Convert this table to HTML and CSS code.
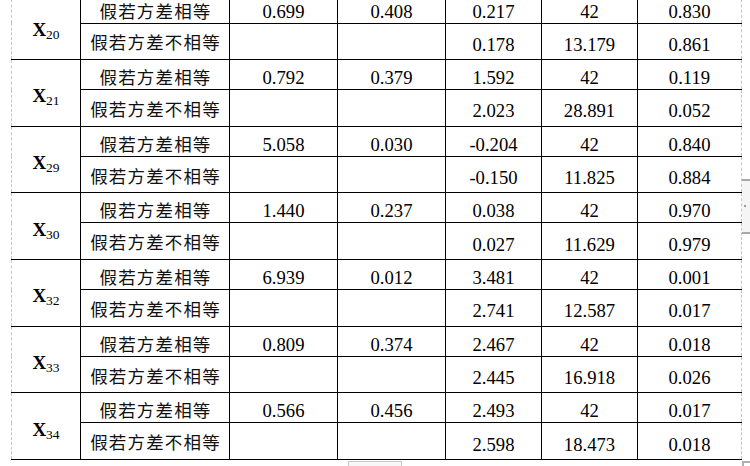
FILE: index.html
```html
<!DOCTYPE html>
<html lang="zh">
<head>
<meta charset="utf-8">
<title>独立样本检验</title>
<link rel="stylesheet" href="styles.css">
</head>
<body>
<div class="page">
  <table class="t">
    <colgroup>
      <col class="c-var"><col class="c-cn"><col class="c-n1"><col class="c-n2"><col class="c-n3"><col class="c-n4"><col class="c-n5">
    </colgroup>
    <tbody>
      <tr class="r1"><td class="var" rowspan="2"><span class="x">X</span><span class="sub">20</span></td><td class="cn">假若方差相等</td><td>0.699</td><td>0.408</td><td>0.217</td><td>42</td><td>0.830</td></tr>
      <tr class="r2"><td class="cn">假若方差不相等</td><td></td><td></td><td>0.178</td><td>13.179</td><td>0.861</td></tr>
      <tr class="r1"><td class="var" rowspan="2"><span class="x">X</span><span class="sub">21</span></td><td class="cn">假若方差相等</td><td>0.792</td><td>0.379</td><td>1.592</td><td>42</td><td>0.119</td></tr>
      <tr class="r2"><td class="cn">假若方差不相等</td><td></td><td></td><td>2.023</td><td>28.891</td><td>0.052</td></tr>
      <tr class="r1"><td class="var" rowspan="2"><span class="x">X</span><span class="sub">29</span></td><td class="cn">假若方差相等</td><td>5.058</td><td>0.030</td><td>-0.204</td><td>42</td><td>0.840</td></tr>
      <tr class="r2"><td class="cn">假若方差不相等</td><td></td><td></td><td>-0.150</td><td>11.825</td><td>0.884</td></tr>
      <tr class="r1"><td class="var" rowspan="2"><span class="x">X</span><span class="sub">30</span></td><td class="cn">假若方差相等</td><td>1.440</td><td>0.237</td><td>0.038</td><td>42</td><td>0.970</td></tr>
      <tr class="r2"><td class="cn">假若方差不相等</td><td></td><td></td><td>0.027</td><td>11.629</td><td>0.979</td></tr>
      <tr class="r1"><td class="var" rowspan="2"><span class="x">X</span><span class="sub">32</span></td><td class="cn">假若方差相等</td><td>6.939</td><td>0.012</td><td>3.481</td><td>42</td><td>0.001</td></tr>
      <tr class="r2"><td class="cn">假若方差不相等</td><td></td><td></td><td>2.741</td><td>12.587</td><td>0.017</td></tr>
      <tr class="r1"><td class="var" rowspan="2"><span class="x">X</span><span class="sub">33</span></td><td class="cn">假若方差相等</td><td>0.809</td><td>0.374</td><td>2.467</td><td>42</td><td>0.018</td></tr>
      <tr class="r2"><td class="cn">假若方差不相等</td><td></td><td></td><td>2.445</td><td>16.918</td><td>0.026</td></tr>
      <tr class="r1"><td class="var" rowspan="2"><span class="x">X</span><span class="sub">34</span></td><td class="cn">假若方差相等</td><td>0.566</td><td>0.456</td><td>2.493</td><td>42</td><td>0.017</td></tr>
      <tr class="r2"><td class="cn">假若方差不相等</td><td></td><td></td><td>2.598</td><td>18.473</td><td>0.018</td></tr>
    </tbody>
  </table>
  <div class="hscroll"></div>
  <div class="vhandle"><span class="dot"></span></div>
  <div class="corner"></div>
</div>
</body>
</html>
```
FILE: styles.css
```css
html, body {
  margin: 0;
  padding: 0;
  background: #ffffff;
}
.page {
  position: relative;
  width: 750px;
  height: 466px;
  overflow: hidden;
  padding-left: 11px;
  box-sizing: border-box;
}
.t {
  margin-top: -7.5px;
  border-collapse: collapse;
  table-layout: fixed;
  width: 730px;
  font-family: "Liberation Serif", "Times New Roman", serif;
  font-size: 18.67px;
  color: #000;
  border-left: 1px dashed #c4c4c4;
  border-right: 1px dashed #c4c4c4;
}
.c-var { width: 69px; }
.c-cn { width: 149px; }
.c-n1 { width: 108px; }
.c-n2 { width: 108px; }
.c-n3 { width: 96px; }
.c-n4 { width: 96px; }
.c-n5 { width: 104px; }
.t td {
  border-top: 1px solid #000;
  border-bottom: 1px solid #000;
  border-left: 1px solid #000;
  border-right: 1px solid #000;
  padding: 7px 0 0 0;
  text-align: center;
  vertical-align: middle;
  line-height: 20px;
  white-space: nowrap;
}
.t td:first-child { border-left: 1px dashed #c4c4c4; }
.t tr.r2 td:last-child,
.t tr.r1 td:last-child { border-right: 1px dashed #c4c4c4; }
.r1 { height: 30px; }
.r2 { height: 36.67px; }
.t td.cn {
  font-family: "Noto Sans CJK SC", "Noto Sans CJK JP", sans-serif;
  font-size: 17.5px;
  letter-spacing: 1.17px;
  padding-left: 1px;
  padding-top: 5px;
  color: #111;
}
.r2 td.cn { padding-top: 2px; }
.t td.var { padding-top: 9px; }
.x {
  font-weight: bold;
  font-size: 19px;
}
.sub {
  font-size: 13.5px;
  position: relative;
  top: 3px;
}
.hscroll {
  position: absolute;
  left: 348px;
  top: 461px;
  width: 54px;
  height: 10px;
  border: 1px solid #c8c8c8;
  background: #f7f7f7;
  box-sizing: border-box;
}
.vhandle {
  position: absolute;
  left: 742px;
  top: 179px;
  width: 10px;
  height: 55px;
  background: #f5f5f5;
  border-top: 2px solid #a8a8a8;
  border-bottom: 2px solid #a8a8a8;
  box-sizing: border-box;
}
.dot {
  position: absolute;
  left: 2px;
  top: 24px;
  width: 2px;
  height: 2px;
  background: #9a9a9a;
}
.corner {
  position: absolute;
  left: 742px;
  top: 461px;
  width: 10px;
  height: 8px;
  border-left: 2px solid #b0b0b0;
  border-top: 2px solid #b0b0b0;
  box-sizing: border-box;
}
```
